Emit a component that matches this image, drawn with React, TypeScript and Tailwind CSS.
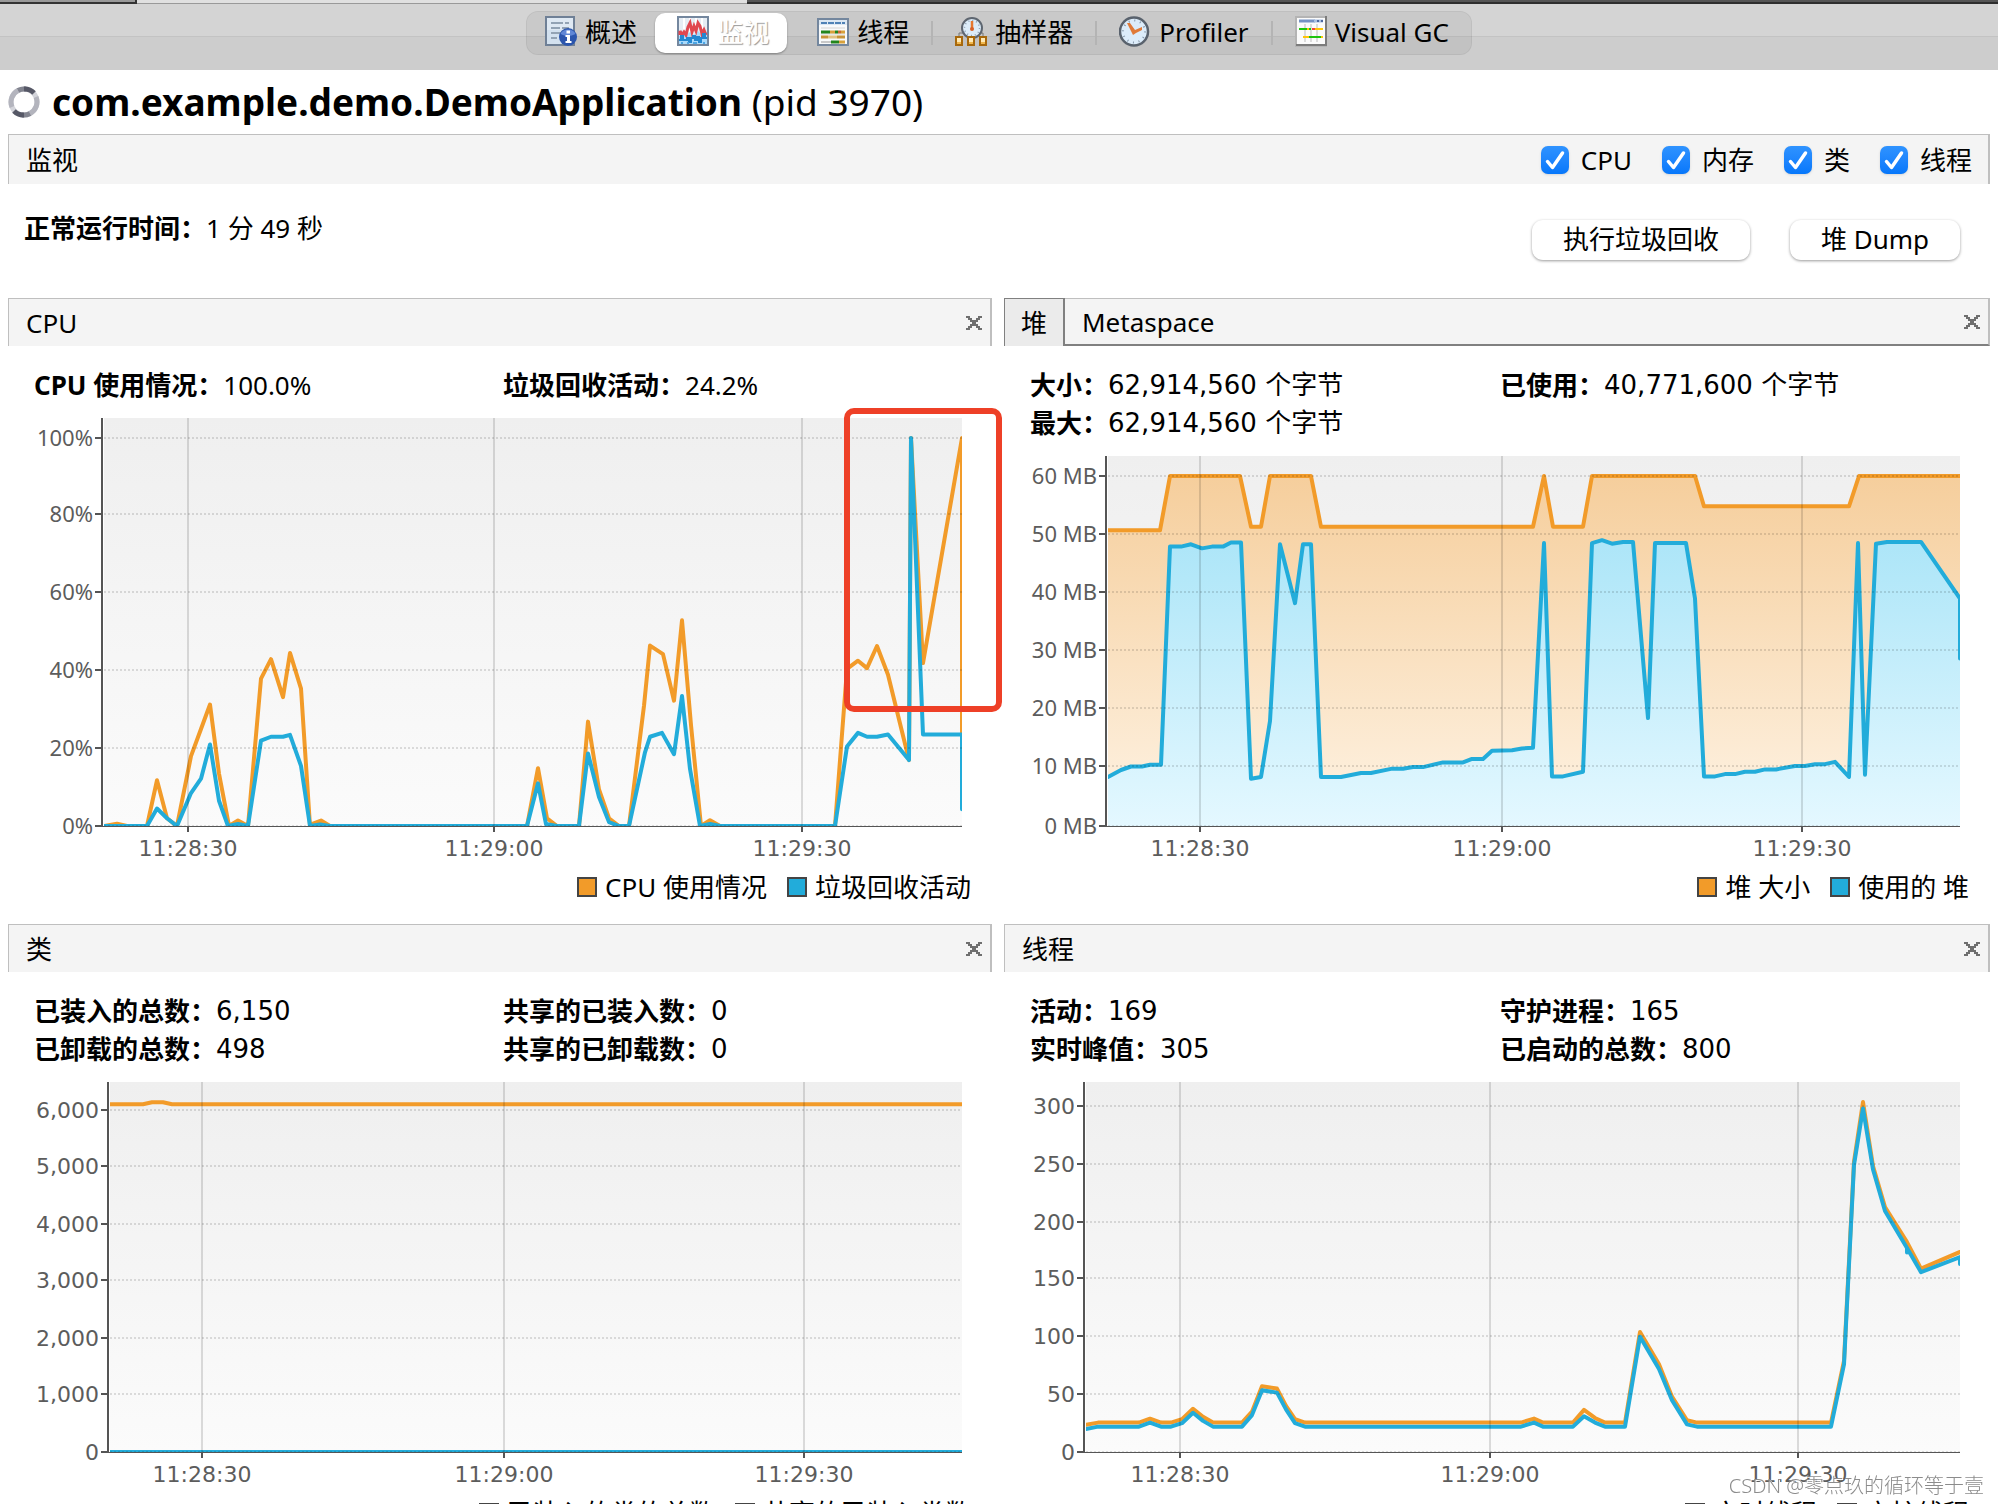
import { ReactNode, useState } from 'react'

type Point = [number, number]

type Series = {
  color: string
  points: Point[]
  fill?: string
}

type ChartProps = {
  id: string
  title: string
  width: number
  height: number
  left: number
  right: number
  yTicks: { label: string; value: number; y: number }[]
  xTicks: number[]
  perUnit: number
  series: Series[]
  labelClass: string
}

const ORANGE = '#f29b29'
const BLUE = '#22acda'
const TIMES = ['11:28:30', '11:29:00', '11:29:30']

const NOTO = "[font-family:'Noto_Sans','Noto_Sans_CJK_SC',sans-serif]"
const DIGITS = "[font-family:'DejaVu_Sans','Noto_Sans_CJK_SC',sans-serif]"

const cpuUsage: Point[] = [
  [96, 0], [109, 0.6], [119, 0], [139, 0], [149, 11.8], [159, 2], [169, 0], [183, 18], [193, 25], [202, 31.3],
  [211, 13.5], [221, 0], [230, 1.4], [240, 0], [253, 38], [263, 43], [275, 33.2], [282, 44.6], [293, 35.4], [302, 0],
  [303, 0.4], [313, 1.4], [322, 0], [519, 0], [530, 14.9], [539, 2], [549, 0], [571, 0], [580, 26.9], [591, 9.4],
  [601, 2], [611, 0], [621, 0], [636, 31], [642, 46.5], [655, 44.3], [666, 32.3], [674, 53], [683, 26], [693, 0],
  [702, 1.5], [712, 0], [827, 0], [839, 40.5], [850, 42.6], [859, 40.7], [869, 46.4], [880, 39], [901, 17],
  [903, 100], [915, 42], [954, 100], [954, 24],
]

const gcActivity: Point[] = [
  [96, 0], [139, 0], [149, 4.5], [159, 2], [169, 0], [183, 8.5], [193, 12.2], [202, 21], [211, 6.5], [220, 0],
  [230, 0.5], [240, 0], [253, 22], [263, 23], [275, 23], [282, 23.5], [293, 15.5], [302, 0], [312, 0.4], [322, 0],
  [519, 0], [530, 11], [538, 0.5], [549, 0], [571, 0], [580, 18.7], [591, 7.5], [601, 1], [611, 0], [621, 0],
  [637, 19], [642, 23], [654, 24], [666, 18.5], [674, 33.5], [682, 14.7], [692, 0], [702, 0.5], [712, 0], [827, 0],
  [839, 20.5], [850, 24], [859, 23], [869, 23], [880, 23.6], [901, 17], [903, 100], [915, 23.6], [954, 23.6],
  [954, 4.3],
]

const heapSize: Point[] = [
  [104, 50.7], [156, 50.7], [166, 60], [236, 60], [247, 51.3], [257, 51.3], [266, 60], [307, 60], [317, 51.3],
  [529, 51.3], [540, 60], [549, 51.3], [579, 51.3], [588, 60], [691, 60], [700, 54.8], [845, 54.8], [855, 60],
  [956, 60],
]

const heapUsed: Point[] = [
  [104, 8.4], [117, 9.6], [127, 10.2], [138, 10.2], [146, 10.5], [157, 10.5], [166, 47.9], [177, 47.9], [187, 48.3],
  [198, 47.6], [208, 47.9], [219, 47.9], [227, 48.6], [237, 48.6], [247, 8.1], [257, 8.4], [266, 18], [276, 48.3],
  [291, 38.2], [299, 48.3], [307, 48.3], [317, 8.4], [337, 8.4], [357, 9.1], [367, 9.1], [387, 9.8], [399, 9.8],
  [409, 10.1], [419, 10.1], [439, 10.9], [459, 10.9], [468, 11.5], [479, 11.5], [488, 12.9], [508, 13], [518, 13.3],
  [529, 13.4], [540, 48.5], [548, 8.5], [559, 8.5], [579, 9.3], [588, 48.5], [598, 49], [608, 48.4], [619, 48.7],
  [629, 48.7], [644, 18.5], [651, 48.5], [682, 48.5], [691, 39], [700, 8.5], [711, 8.5], [721, 8.9], [731, 8.9],
  [741, 9.3], [751, 9.3], [761, 9.7], [772, 9.7], [791, 10.3], [801, 10.3], [811, 10.6], [821, 10.6], [831, 11],
  [845, 8.4], [854, 48.5], [861, 8.8], [872, 48.4], [883, 48.7], [917, 48.7], [956, 39], [956, 28.7],
]

const loadedClasses: Point[] = [[102, 6100], [135, 6100], [144, 6135], [155, 6135], [164, 6100], [954, 6100]]
const sharedClasses: Point[] = [[102, 0], [954, 0]]

const liveThreads: Point[] = [
  [82, 23.6], [94, 25.5], [135, 25.5], [146, 28.9], [157, 25.5], [167, 25.5], [178, 28.5], [189, 37.5], [199, 30.5],
  [209, 25.5], [238, 25.5], [248, 35], [258, 57], [273, 55], [282, 40], [291, 28.5], [301, 25.5], [517, 25.5],
  [530, 29], [539, 25.5], [569, 25.5], [580, 36.5], [591, 29.5], [601, 25.5], [621, 25.5], [636, 104], [655, 76],
  [668, 48], [683, 27.5], [693, 25.5], [827, 25.5], [840, 79], [850, 252], [859, 303.5], [869, 248], [881, 212.5],
  [903, 182], [917, 159], [956, 173.5],
]

const daemonThreads: Point[] = [
  [82, 20], [94, 22], [135, 22], [146, 25.5], [157, 22], [167, 22], [178, 25], [189, 34], [199, 27], [209, 22],
  [238, 22], [248, 32], [258, 53.5], [273, 51.5], [282, 37], [291, 25], [301, 22], [517, 22], [530, 25.5], [539, 22],
  [569, 22], [580, 31], [591, 25.5], [601, 22], [621, 22], [636, 100], [655, 72], [668, 45], [683, 24], [693, 22],
  [827, 22], [840, 76], [850, 249], [859, 298], [869, 245], [881, 209], [903, 177], [903, 173], [903, 177],
  [917, 156], [956, 169], [956, 163],
]

function Chart({ id, title, width, height, left, right, yTicks, xTicks, perUnit, series, labelClass }: ChartProps) {
  const toPath = (points: Point[]) => points.map(([x, v]) => `${x},${height - v * perUnit}`).join(' ')

  return (
    <svg viewBox={`0 0 ${width} ${height + 44}`} className="block w-full" role="img" aria-label={title}>
      <defs>
        <linearGradient id={`${id}-bg`} x1="0" y1="0" x2="0" y2="1">
          <stop offset="0" stopColor="#efefef" />
          <stop offset="1" stopColor="#fbfbfb" />
        </linearGradient>
        <linearGradient id={`${id}-orange`} gradientUnits="userSpaceOnUse" x1="0" y1="0" x2="0" y2={height}>
          <stop offset="0" stopColor="#f5cc98" />
          <stop offset="1" stopColor="#fef3e4" />
        </linearGradient>
        <linearGradient id={`${id}-blue`} gradientUnits="userSpaceOnUse" x1="0" y1="0" x2="0" y2={height}>
          <stop offset="0" stopColor="#9ce0f6" />
          <stop offset="1" stopColor="#e4f8ff" />
        </linearGradient>
        <clipPath id={`${id}-clip`}>
          <rect x={left} y="0" width={right - left} height={height} />
        </clipPath>
      </defs>

      <rect x={left} y="0" width={right - left} height={height} fill={`url(#${id}-bg)`} />

      <g clipPath={`url(#${id}-clip)`}>
        {series.map((s) => (
          <g key={s.color}>
            {s.fill && (
              <polygon points={`${left},${height} ${toPath(s.points)} ${right},${height}`} fill={`url(#${id}-${s.fill})`} />
            )}
            <polyline
              points={toPath(s.points)}
              fill="none"
              stroke={s.color}
              strokeWidth="4"
              strokeLinejoin="round"
              strokeLinecap="round"
            />
          </g>
        ))}
      </g>

      {yTicks.map((t) => (
        <g key={t.value}>
          <line x1={left} x2={right} y1={t.y} y2={t.y} stroke="#000" strokeOpacity="0.12" strokeWidth="2" strokeDasharray="2 2" />
          <line x1={left - 9} x2={left - 2} y1={t.y} y2={t.y} stroke="#555" strokeWidth="2" />
          <text x={left - 11} y={t.y + 8} textAnchor="end" fontSize="22" fill="#5c5c5c" className={labelClass}>
            {t.label}
          </text>
        </g>
      ))}

      {xTicks.map((x, i) => (
        <g key={x}>
          <line x1={x} x2={x} y1="0" y2={height} stroke="#000" strokeOpacity="0.13" strokeWidth="2" />
          <line x1={x} x2={x} y1={height} y2={height + 6} stroke="#555" strokeWidth="2" />
          <text x={x} y={height + 30} textAnchor="middle" fontSize="22" fill="#5c5c5c" className={DIGITS}>
            {TIMES[i]}
          </text>
        </g>
      ))}

      <line x1={left - 2} x2={left - 2} y1="0" y2={height + 1} stroke="#555" strokeWidth="2" />
      <line x1={left - 3} x2={right} y1={height + 0.5} y2={height + 0.5} stroke="#555" />
    </svg>
  )
}

function CloseButton({ label }: { label: string }) {
  return (
    <button type="button" aria-label={label} className="ml-auto flex size-6 items-center justify-center">
      <svg width="16" height="14" viewBox="0 0 16 14" shapeRendering="crispEdges">
        <path
          d="M0 0h4v2h2v2h4V2h2V0h4v2h-2v2h-2v2h-2v2h2v2h2v2h2v2h-4v-2h-2v-2H6v2H4v2H0v-2h2v-2h2V8h2V6H4V4H2V2H0z"
          fill="#6e6e6e"
        />
      </svg>
    </button>
  )
}

function PanelBar({ title }: { title: string }) {
  return (
    <div className="flex h-12 items-center border-t border-r-2 border-l border-[#bfbfbf] bg-[#f4f4f4] pr-1 pl-[17px]">
      <h2>{title}</h2>
      <CloseButton label={`关闭 ${title}`} />
    </div>
  )
}

function Stat({ label, value, className = DIGITS }: { label: string; value: string; className?: string }) {
  return (
    <div className="flex">
      <dt className="font-bold">{label}：</dt>
      <dd className={className}>{value}</dd>
    </div>
  )
}

function Stats({ children }: { children: ReactNode }) {
  return <dl className="mt-5 mb-3.5 grid grid-cols-2 pr-5 pl-[26px] leading-[38px]">{children}</dl>
}

function Legend({ items }: { items: [string, string] }) {
  return (
    <ul className="flex h-[34px] items-center justify-end gap-5 pr-[21px] whitespace-nowrap">
      {items.map((item, i) => (
        <li key={item} className="flex items-center gap-2">
          <span className={`size-5 border-2 border-[#444] ${i === 0 ? 'bg-[#f29b29]' : 'bg-[#22acda]'}`} />
          {item}
        </li>
      ))}
    </ul>
  )
}

function Check({ label }: { label: string }) {
  const [on, setOn] = useState(true)
  return (
    <label className="flex items-center gap-3">
      <span className="relative size-7">
        <input
          type="checkbox"
          checked={on}
          onChange={(e) => setOn(e.target.checked)}
          className="block size-7 appearance-none rounded-[7px] border border-gray-300 bg-white shadow-sm checked:border-0 checked:bg-linear-to-b checked:from-[#2f93ff] checked:to-[#0577fb]"
        />
        {on && (
          <svg viewBox="0 0 28 28" className="pointer-events-none absolute inset-0 size-7">
            <path d="M6.5 15.5l5 6L21.5 7" fill="none" stroke="#fff" strokeWidth="3.5" strokeLinecap="round" strokeLinejoin="round" />
          </svg>
        )}
      </span>
      {label}
    </label>
  )
}

function OverviewIcon() {
  return (
    <svg width="32" height="32" viewBox="0 0 32 32">
      <rect x="1" y="1" width="28" height="28" fill="#d3e1ef" stroke="#6f8096" strokeWidth="2" />
      <rect x="2" y="2" width="26" height="12" fill="#dfe9f3" />
      <path d="M6 7h12M20 7h4M6 12h9M17 12h7M6 17h10M6 22h6" stroke="#93a3b4" strokeWidth="2" />
      <circle cx="23" cy="21" r="9" fill="#2b55ad" />
      <path d="M15.500 18a8 7 0 0 1 15 0a16 16 0 0 1-15 0z" fill="#5f86d6" />
      <path d="M21.500 14.500h3.500v3h-3.500zM20.500 19h4.500v6h1.500v2h-6v-2h1.500v-4h-1.500z" fill="#fff" />
    </svg>
  )
}

function MonitorIcon() {
  return (
    <svg width="32" height="32" viewBox="0 0 32 32">
      <rect x="1" y="1" width="30" height="28" fill="#e6edf4" stroke="#74879e" strokeWidth="2" />
      <path d="M7 2v26M13 2v26M19 2v26M25 2v26" stroke="#fff" strokeWidth="2" />
      <path d="M2 20l4-3 3 2 4-3 4 3 4-4 4 4 4-3h1v12H2z" fill="#a9d9fa" />
      <path
        d="M3 19v-4l2 4 2-3 2 3 2-8 2-4 2 9 2-6 2 5 2-8 2 3 2 8 2-4 2 5"
        fill="none"
        stroke="#e0474f"
        strokeWidth="3"
      />
      <path
        d="M2 24h2v-4h2v4h4v-2h2v4h2v-4h2v-2h2v4h2v-3h2v5h2v-4h2v-4h2v4h2"
        fill="none"
        stroke="#2487d0"
        strokeWidth="2"
      />
      <path d="M4 27h2M10 27h2M16 27h4M26 27h2" stroke="#4ea6e4" strokeWidth="2" />
    </svg>
  )
}

function ThreadsIcon() {
  return (
    <svg width="32" height="32" viewBox="0 0 32 32">
      <rect x="1" y="3" width="30" height="26" fill="#f8fafb" stroke="#74879e" strokeWidth="2" />
      <path d="M2 4h28v5H2z" fill="#dce8f3" />
      <path d="M4 7h24" stroke="#4f82b6" strokeWidth="2" strokeDasharray="6 1" />
      <path d="M4 12h24M4 18h24" stroke="#d4d4d4" strokeWidth="1" />
      <path d="M4 16h9M18 16h3" stroke="#23851c" strokeWidth="3" />
      <path d="M13 16h5M24 16h4" stroke="#d8a13a" strokeWidth="3" />
      <path d="M21 16h3" stroke="#c96a32" strokeWidth="3" />
      <path d="M4 21h7M20 21h8" stroke="#c9953a" strokeWidth="3" />
      <path d="M11 21h9" stroke="#e3c27f" strokeWidth="3" />
      <path d="M4 26h10" stroke="#c8c8c8" strokeWidth="2" />
      <path d="M14 26h8" stroke="#23851c" strokeWidth="3" />
      <path d="M22 26h6" stroke="#d8a13a" strokeWidth="3" />
    </svg>
  )
}

function SamplerIcon() {
  return (
    <svg width="32" height="32" viewBox="0 0 32 32">
      <path d="M4 20v-3h24v3M16 17v4" fill="none" stroke="#777" strokeWidth="1" />
      <circle cx="17" cy="12" r="10" fill="#dcecf9" stroke="#5e6670" strokeWidth="2" />
      <circle cx="17" cy="12" r="7.500" fill="none" stroke="#8c9dae" strokeWidth="1.500" strokeDasharray="1 2.930" />
      <path d="M17 5v8" stroke="#e67a32" strokeWidth="2.500" />
      <circle cx="17" cy="13" r="2" fill="#d9622a" />
      {[0, 12, 24].map((x) => (
        <g key={x}>
          <rect x={x + 1} y="21" width="6" height="8" fill="#ffe9b5" stroke="#a7680c" strokeWidth="2" />
          <path d={`M${x + 2} 27h4`} stroke="#f1b74c" strokeWidth="2" />
        </g>
      ))}
    </svg>
  )
}

function ProfilerIcon() {
  return (
    <svg width="32" height="32" viewBox="0 0 32 32">
      <circle cx="15" cy="15.500" r="14" fill="#dcecfa" stroke="#59626d" strokeWidth="2.500" />
      <circle cx="15" cy="15.500" r="11" fill="none" stroke="#8294a6" strokeWidth="2" strokeDasharray="1 4.760" />
      <path d="M8 7l3 0 5 7 7-3v3l-6 3-3 2-2-4z" fill="#e07a38" />
    </svg>
  )
}

function VisualGcIcon() {
  return (
    <svg width="32" height="32" viewBox="0 0 32 32">
      <rect x="1" y="1" width="30" height="29" fill="#fbfbfb" stroke="#b4b4b4" strokeWidth="2" />
      <path d="M31 0v30M1 29h31" stroke="#7c7c7c" strokeWidth="2" />
      <path d="M4 5h16" stroke="#7592c4" strokeWidth="3" />
      <path d="M19 5h9" stroke="#a9bfe2" strokeWidth="3" />
      <path d="M22 5h2M26 5h2" stroke="#4c68a0" strokeWidth="2" />
      <path d="M10 8v18M16 8v18M22 8v18" stroke="#dcdcdc" strokeWidth="2" />
      <path d="M4 13h8M14 13h2" stroke="#1fc40e" strokeWidth="2" />
      <path d="M12 13h2M20 13h8M8 21h6M26 21h2" stroke="#ffc60a" strokeWidth="2" />
      <path d="M17 13h3" stroke="#f5473a" strokeWidth="2" />
      <path d="M14 21h12" stroke="#1fc40e" strokeWidth="2" />
    </svg>
  )
}

function Spinner() {
  return (
    <svg width="32" height="32" viewBox="0 0 32 32" fill="none" strokeWidth="5">
      <circle cx="16" cy="16" r="13" stroke="#d3d4da" />
      <path d="M4 21A13 13 0 0 1 10 4.500" stroke="#b3b4bd" />
      <path d="M10 4.500A13 13 0 0 1 18 3" stroke="#82848f" />
      <path d="M16 3A13 13 0 0 1 26 7" stroke="#565866" />
      <path d="M28 11A13 13 0 0 1 22 27.500" stroke="#b3b4bd" />
      <path d="M22 27.500A13 13 0 0 1 14 29" stroke="#82848f" />
      <path d="M16 29A13 13 0 0 1 6 25" stroke="#565866" />
    </svg>
  )
}

function Tab({ icon, label, active = false }: { icon: ReactNode; label: string; active?: boolean }) {
  return (
    <button
      type="button"
      aria-pressed={active}
      className={
        active
          ? 'mr-2 -ml-1 flex h-10 items-center gap-2 rounded-[10px] bg-white pr-[18px] pb-0.5 pl-[22px] text-white shadow-[0_1px_2px_rgba(0,0,0,0.35)] [text-shadow:1px_1px_1px_#999]'
          : 'flex h-10 items-center gap-2 px-[22px] pb-0.5 first:pl-[18px]'
      }
    >
      {icon}
      {label}
    </button>
  )
}

const Divider = () => <span className="h-6 w-0.5 bg-[#b4b4b4]" />

export default function App() {
  return (
    <div className={`h-screen overflow-hidden bg-white text-[26px] leading-8 text-black ${NOTO}`}>
      <div className="flex h-1">
        <div className="w-[137px] border-r-2 border-b-2 border-[#333] bg-[#999]" />
        <div className="w-[610px] border-b border-[#999] bg-[#e0e0e0]" />
        <div className="flex-1 border-b-2 border-[#2e2e2e] bg-[#555]" />
      </div>

      <header className="flex h-[66px] justify-center bg-[linear-gradient(#d4d4d4_32px,#c3c3c3_32px,#c3c3c3_33px,#cdcdcd_33px)] pt-[7px]">
        <nav className="flex h-11 items-center rounded-xl border border-black/5 bg-black/5">
          <Tab icon={<OverviewIcon />} label="概述" />
          <Tab icon={<MonitorIcon />} label="监视" active />
          <Tab icon={<ThreadsIcon />} label="线程" />
          <Divider />
          <Tab icon={<SamplerIcon />} label="抽样器" />
          <Divider />
          <Tab icon={<ProfilerIcon />} label="Profiler" />
          <Divider />
          <Tab icon={<VisualGcIcon />} label="Visual GC" />
        </nav>
      </header>

      <main className="px-2">
        <div className="flex h-16 items-center gap-3">
          <Spinner />
          <h1 className="text-[37px] leading-[48px]">
            <b>com.example.demo.DemoApplication</b> (pid 3970)
          </h1>
        </div>

        <div className="flex h-[50px] items-center justify-between border-t border-r-2 border-l border-[#bfbfbf] bg-[#f4f4f4] pr-4 pl-[17px]">
          <h2>监视</h2>
          <div className="flex items-center gap-[30px]">
            <Check label="CPU" />
            <Check label="内存" />
            <Check label="类" />
            <Check label="线程" />
          </div>
        </div>

        <div className="flex h-[114px] items-start justify-between pr-[30px] pl-4">
          <p className="pt-7">
            <b>正常运行时间：</b>1 分 49 秒
          </p>
          <div className="flex gap-10 pt-9">
            <button type="button" className="h-10 rounded-[11px] px-[31px] pb-0.5 shadow-[0_1px_3px_rgba(0,0,0,0.4)]">
              执行垃圾回收
            </button>
            <button type="button" className="h-10 rounded-[11px] px-[31px] pb-0.5 shadow-[0_1px_3px_rgba(0,0,0,0.4)]">
              堆 Dump
            </button>
          </div>
        </div>

        <div className="grid grid-cols-[984fr_986fr] gap-x-3 gap-y-5">
          <section className="relative">
            <PanelBar title="CPU" />
            <Stats>
              <Stat label="CPU 使用情况" value="100.0%" className={NOTO} />
              <Stat label="垃圾回收活动" value="24.2%" className={NOTO} />
            </Stats>
            <Chart
              id="cpu"
              title="CPU"
              width={984}
              height={408}
              left={96}
              right={954}
              perUnit={3.88}
              labelClass={NOTO}
              xTicks={[180, 486, 794]}
              yTicks={[
                { label: '100%', value: 100, y: 20 },
                { label: '80%', value: 80, y: 96 },
                { label: '60%', value: 60, y: 174 },
                { label: '40%', value: 40, y: 252 },
                { label: '20%', value: 20, y: 330 },
                { label: '0%', value: 0, y: 408 },
              ]}
              series={[
                { color: ORANGE, points: cpuUsage },
                { color: BLUE, points: gcActivity },
              ]}
            />
            <Legend items={['CPU 使用情况', '垃圾回收活动']} />
            {/* marks the spike at the end of the CPU graph */}
            <div className="absolute top-[110px] -right-2.5 z-10 h-[304px] w-[158px] rounded-[10px] border-6 border-[#ee4027]" />
          </section>

          <section>
            <div className="flex h-12">
              <button type="button" className="border-t border-r-2 border-l border-[#808080] bg-[#ebebeb] px-4">
                堆
              </button>
              <div className="flex flex-1 items-center border-t border-r-2 border-b-2 border-t-[#bfbfbf] border-r-[#bfbfbf] border-b-[#808080] bg-[#f4f4f4] pr-1 pl-[17px]">
                <button type="button">Metaspace</button>
                <CloseButton label="关闭 堆" />
              </div>
            </div>
            <Stats>
              <Stat label="大小" value="62,914,560 个字节" />
              <Stat label="已使用" value="40,771,600 个字节" />
              <Stat label="最大" value="62,914,560 个字节" />
            </Stats>
            <Chart
              id="heap"
              title="堆"
              width={986}
              height={370}
              left={104}
              right={956}
              perUnit={5.833}
              labelClass={NOTO}
              xTicks={[196, 498, 798]}
              yTicks={[
                { label: '60 MB', value: 60, y: 20 },
                { label: '50 MB', value: 50, y: 78 },
                { label: '40 MB', value: 40, y: 136 },
                { label: '30 MB', value: 30, y: 194 },
                { label: '20 MB', value: 20, y: 252 },
                { label: '10 MB', value: 10, y: 310 },
                { label: '0 MB', value: 0, y: 370 },
              ]}
              series={[
                { color: ORANGE, points: heapSize, fill: 'orange' },
                { color: BLUE, points: heapUsed, fill: 'blue' },
              ]}
            />
            <Legend items={['堆 大小', '使用的 堆']} />
          </section>

          <section>
            <PanelBar title="类" />
            <Stats>
              <Stat label="已装入的总数" value="6,150" />
              <Stat label="共享的已装入数" value="0" />
              <Stat label="已卸载的总数" value="498" />
              <Stat label="共享的已卸载数" value="0" />
            </Stats>
            <Chart
              id="classes"
              title="类"
              width={984}
              height={370}
              left={102}
              right={954}
              perUnit={0.057}
              labelClass={DIGITS}
              xTicks={[194, 496, 796]}
              yTicks={[
                { label: '6,000', value: 6000, y: 28 },
                { label: '5,000', value: 5000, y: 84 },
                { label: '4,000', value: 4000, y: 142 },
                { label: '3,000', value: 3000, y: 198 },
                { label: '2,000', value: 2000, y: 256 },
                { label: '1,000', value: 1000, y: 312 },
                { label: '0', value: 0, y: 370 },
              ]}
              series={[
                { color: ORANGE, points: loadedClasses },
                { color: BLUE, points: sharedClasses },
              ]}
            />
            <Legend items={['已装入的类的总数', '共享的已装入类数']} />
          </section>

          <section>
            <PanelBar title="线程" />
            <Stats>
              <Stat label="活动" value="169" />
              <Stat label="守护进程" value="165" />
              <Stat label="实时峰值" value="305" />
              <Stat label="已启动的总数" value="800" />
            </Stats>
            <Chart
              id="threads"
              title="线程"
              width={986}
              height={370}
              left={82}
              right={956}
              perUnit={1.153}
              labelClass={DIGITS}
              xTicks={[176, 486, 794]}
              yTicks={[
                { label: '300', value: 300, y: 24 },
                { label: '250', value: 250, y: 82 },
                { label: '200', value: 200, y: 140 },
                { label: '150', value: 150, y: 196 },
                { label: '100', value: 100, y: 254 },
                { label: '50', value: 50, y: 312 },
                { label: '0', value: 0, y: 370 },
              ]}
              series={[
                { color: ORANGE, points: liveThreads },
                { color: BLUE, points: daemonThreads },
              ]}
            />
            <Legend items={['实时线程', '守护线程']} />
          </section>
        </div>
      </main>

      <div className="fixed right-3.5 bottom-1 z-10 text-xl font-light text-[#8c8c8c] [text-shadow:1px_1px_0_#fff]">
        CSDN @零点玖的循环等于壹
      </div>
    </div>
  )
}
